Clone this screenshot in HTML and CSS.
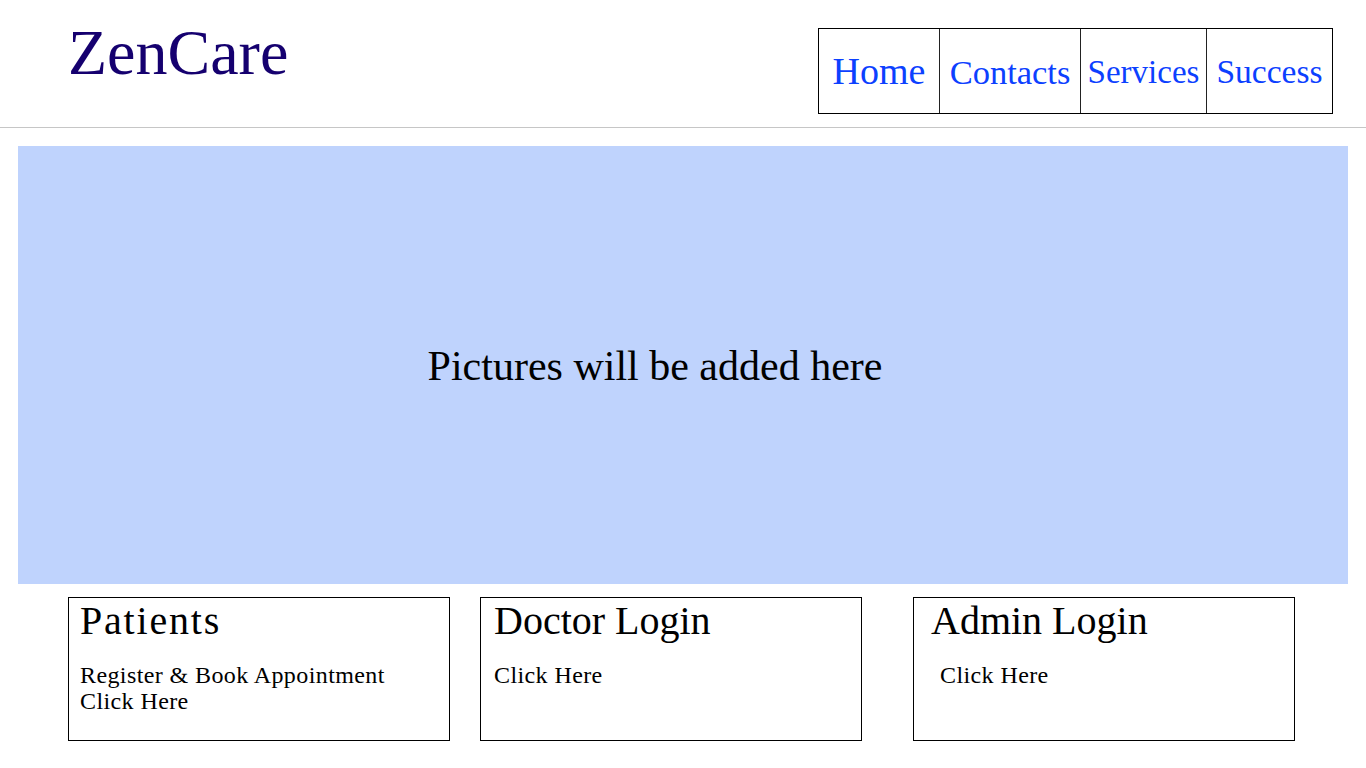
FILE: index.html
```html
<!DOCTYPE html>
<html lang="en">
<head>
<meta charset="utf-8">
<title>ZenCare</title>
<link rel="stylesheet" href="styles.css">
</head>
<body>
<header class="site-header">
  <div class="logo">ZenCare</div>
  <nav class="nav">
    <a class="nav-item nav-home" href="#">Home</a>
    <a class="nav-item nav-contacts" href="#">Contacts</a>
    <a class="nav-item nav-services" href="#">Services</a>
    <a class="nav-item nav-success" href="#">Success</a>
  </nav>
</header>
<section class="hero">
  <p class="hero-text">Pictures will be added here</p>
</section>
<section class="cards">
  <div class="card card-patients">
    <h2 class="card-title">Patients</h2>
    <p class="card-text">Register &amp; Book Appointment<br>Click Here</p>
  </div>
  <div class="card card-doctor">
    <h2 class="card-title">Doctor Login</h2>
    <p class="card-text">Click Here</p>
  </div>
  <div class="card card-admin">
    <h2 class="card-title">Admin Login</h2>
    <p class="card-text card-text-indent">Click Here</p>
  </div>
</section>
</body>
</html>
```
FILE: styles.css
```css
* { box-sizing: border-box; }
html, body { margin: 0; padding: 0; background: #ffffff; }
body { font-family: "Liberation Serif", "Times New Roman", serif; color: #000; }

.site-header {
  height: 128px;
  border-bottom: 1px solid #c6c6c6;
  display: flex;
  justify-content: space-between;
  align-items: flex-start;
}
.logo {
  font-size: 64px;
  line-height: 64px;
  color: #15006f;
  margin: 21px 0 0 68px;
}
.nav {
  display: flex;
  margin: 28px 33px 0 0;
  height: 86px;
  border: 1px solid #000;
}
.nav-item {
  display: flex;
  align-items: center;
  justify-content: center;
  color: #0c40ff;
  text-decoration: none;
  font-size: 33px;
  line-height: 1;
  padding-top: 2px;
}
.nav-home { width: 120px; font-size: 38px; padding-top: 0; }
.nav-contacts { width: 141px; border-left: 1px solid #222; font-size: 34.5px; }
.nav-services { width: 126px; border-left: 1px solid #222; }
.nav-success { width: 126px; border-left: 1px solid #222; font-size: 33.5px; }

.hero {
  margin: 18px 18px 0 18px;
  height: 438px;
  background: #bfd3fd;
  display: flex;
  align-items: center;
  justify-content: center;
  padding-right: 56px;
}
.hero-text {
  margin: 0;
  font-size: 42px;
  line-height: 1;
  padding-top: 2px;
}

.cards {
  display: flex;
  padding-left: 68px;
  margin-top: 13px;
}
.card {
  width: 382px;
  height: 144px;
  border: 1px solid #000;
  padding-top: 3px;
}
.card-patients { padding-left: 11px; }
.card-doctor { margin-left: 30px; padding-left: 13px; }
.card-admin { margin-left: 51px; padding-left: 17px; }
.card-title {
  margin: 0;
  font-weight: normal;
  font-size: 40px;
  line-height: 40px;
}
.card-patients .card-title { letter-spacing: 1.8px; }
.card-text {
  margin: 21px 0 0 0;
  font-size: 24px;
  line-height: 26px;
  letter-spacing: 0.4px;
}
.card-text-indent { padding-left: 9px; }
```
